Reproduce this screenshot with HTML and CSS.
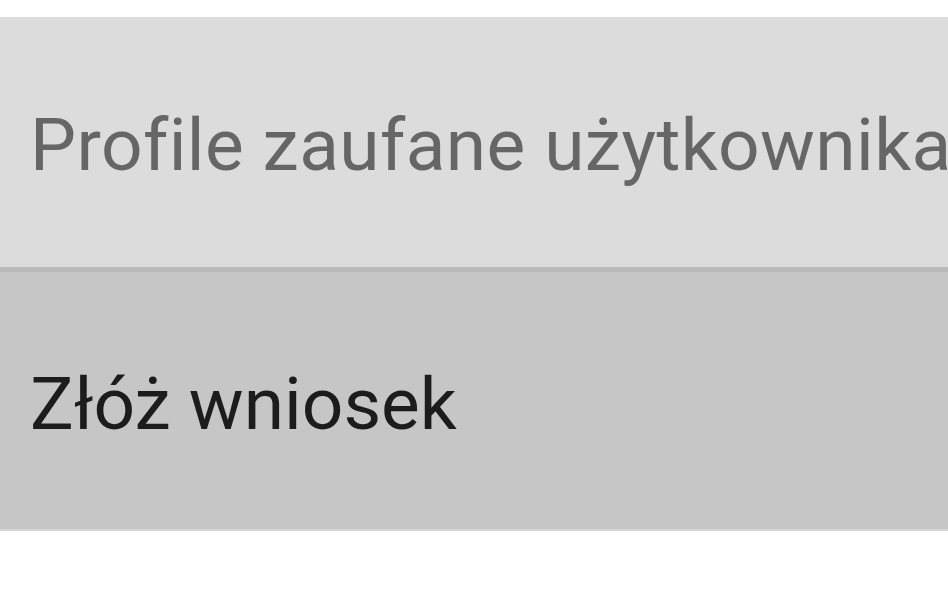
FILE: index.html
```html
<!DOCTYPE html>
<html lang="pl">
<head>
<meta charset="UTF-8">
<meta name="viewport" content="width=device-width, initial-scale=1.0">
<title>Profile zaufane</title>
<link rel="stylesheet" href="styles.css">
</head>
<body>
<div class="menu">
  <div class="item header">Profile zaufane użytkownika</div>
  <div class="item action">Złóż wniosek</div>
</div>
</body>
</html>
```

FILE: styles.css
```css
body {
  margin: 0;
  padding: 0;
  background-color: #fff;
  font-family: Roboto, "Noto Sans", sans-serif;
  overflow: hidden;
}

.menu {
  margin-top: 17px;
  border-bottom: 2px solid #d6d6d6;
}

.item {
  display: flex;
  align-items: center;
  padding-left: 30px;
  padding-top: 6px;
  box-sizing: border-box;
  font-size: 73px;
  white-space: nowrap;
  overflow: hidden;
}

.header {
  height: 255px;
  background-color: #dcdcdc;
  color: #666;
  border-bottom: 5px solid #bababa;
  letter-spacing: 0.4px;
}

.action {
  height: 257px;
  background-color: #c6c6c6;
  color: #1c1c1c;
}
```
